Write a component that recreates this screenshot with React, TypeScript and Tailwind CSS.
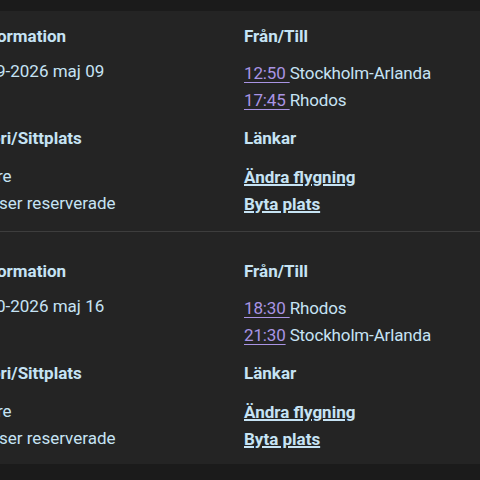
const flights = [
  {
    date: "9-2026 maj 09",
    legs: [
      { time: "12:50", place: "Stockholm-Arlanda", spaced: true },
      { time: "17:45", place: "Rhodos", spaced: true },
    ],
    first: true,
  },
  {
    date: "0-2026 maj 16",
    legs: [
      { time: "18:30", place: "Rhodos", spaced: true },
      { time: "21:30", place: "Stockholm-Arlanda", spaced: false },
    ],
    first: false,
  },
];

// left column is cut off by the viewport, so only the visible tail of each text is shown
function FlightCard({ flight }: { flight: (typeof flights)[number] }) {
  return (
    <div
      className={
        flight.first
          ? "pt-[13px] pb-[13px] border-b border-[#3d3d3d]"
          : "pt-[27px] pb-[11px]"
      }
    >
      <div className="grid grid-cols-[244px_1fr] gap-y-[12px] whitespace-nowrap">
        <div>
          <h3 className="-ml-[3px] text-[17px] leading-[24px] font-bold">ormation</h3>
          <p className="-ml-[4px] mt-[10px] text-[17px] leading-[27px]">{flight.date}</p>
        </div>
        <div>
          <h3 className="text-[17px] leading-[24px] font-bold">Från/Till</h3>
          <ul className="mt-[12px] text-[17px] tracking-[-0.15px] leading-[27px]">
            {flight.legs.map((leg) => (
              <li key={leg.time}>
                <a href="#" className="text-[#a994e4] underline underline-offset-[3px]">
                  {leg.spaced ? leg.time + " " : leg.time}
                </a>
                {leg.spaced ? "" : " "}
                {leg.place}
              </li>
            ))}
          </ul>
        </div>
        <div>
          <h3 className="-ml-[9px] text-[17px] leading-[24px] font-bold">ori/Sittplats</h3>
          <div className="mt-[13px] text-[17px] leading-[27px]">
            <p className="-ml-[3px]">re</p>
            <p className="-ml-[1px]">ser reserverade</p>
          </div>
        </div>
        <div>
          <h3 className="text-[17px] leading-[24px] font-bold">Länkar</h3>
          <div className="mt-[14px] text-[17px] leading-[27px] font-bold">
            <p>
              <a href="#" className="underline decoration-2 underline-offset-[1px]">
                Ändra flygning
              </a>
            </p>
            <p>
              <a href="#" className="underline decoration-2 underline-offset-[1px]">
                Byta plats
              </a>
            </p>
          </div>
        </div>
      </div>
    </div>
  );
}

export default function App() {
  return (
    <div
      className="h-[480px] w-[480px] overflow-hidden bg-[#1b1b1b] pt-[11px] text-[#c6e3f4]"
      style={{ fontFamily: "Roboto, 'Noto Sans', sans-serif" }}
    >
      <div className="bg-[#242424]">
        {flights.map((f) => (
          <FlightCard key={f.date} flight={f} />
        ))}
      </div>
    </div>
  );
}
